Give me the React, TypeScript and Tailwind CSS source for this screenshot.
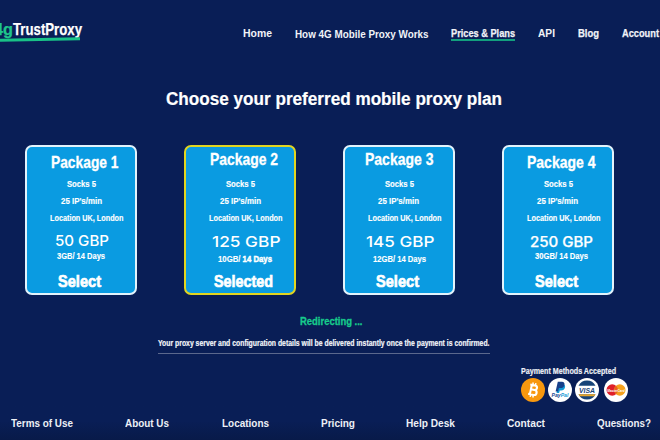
import { useLayoutEffect, useRef } from 'react'
import type { ReactNode } from 'react'

type FitProps = { className: string; children: ReactNode }

// Squeezes one line of text to the width of its box
function Fit({ className, children }: FitProps) {
  const box = useRef<HTMLDivElement>(null)
  const line = useRef<HTMLSpanElement>(null)

  useLayoutEffect(() => {
    if (!box.current || !line.current) return
    line.current.style.transform = 'none'
    const ratio = box.current.getBoundingClientRect().width / line.current.getBoundingClientRect().width
    line.current.style.transform = `scaleX(${ratio})`
  })

  return (
    <div ref={box} className={`shrink-0 whitespace-nowrap ${className}`}>
      <span ref={line} className="inline-block origin-left">{children}</span>
    </div>
  )
}

const packages = [
  {
    name: 'Package 1', price: '50 GBP', data: <>3GB/ 14 Days</>, action: 'Select',
    border: 'border-[#e3f3fb]',
    nameClass: 'mt-[5px] ml-[23.5px] w-[67.5px]',
    socksClass: 'ml-[40px] w-[29px]',
    ipClass: 'ml-[33.5px] w-[41px]',
    locationClass: 'ml-[23px] w-[73.5px]',
    priceClass: 'mt-1 ml-[28px] w-[54px] text-[14.5px]',
    dataClass: 'ml-[30px] w-[48px]',
    actionClass: 'ml-[31px] w-[43px]',
  },
  {
    name: 'Package 2', price: '125 GBP', data: <>10GB/ <span className="[-webkit-text-stroke:0.5px_white]">14 Days</span></>, action: 'Selected',
    border: 'border-[#e2d51f]',
    nameClass: 'mt-[2px] ml-[23.5px] w-[68px]',
    socksClass: 'ml-[40px] w-[29px]',
    ipClass: 'ml-[33.5px] w-[41px]',
    locationClass: 'ml-[23px] w-[73.5px]',
    priceClass: 'mt-[5px] ml-[26px] w-[68.5px] text-[15px]',
    dataClass: 'mt-[3px] ml-[31.5px] w-[54px]',
    actionClass: 'ml-[28px] w-[59px]',
  },
  {
    name: 'Package 3', price: '145 GBP', data: <>12GB/ 14 Days</>, action: 'Select',
    border: 'border-[#e3f3fb]',
    nameClass: 'mt-[2px] ml-[20px] w-[68.5px]',
    socksClass: 'ml-[40px] w-[29px]',
    ipClass: 'ml-[33px] w-[41px]',
    locationClass: 'ml-[22.5px] w-[73.5px]',
    priceClass: 'mt-[5px] ml-[21px] w-[68.5px] text-[15px]',
    dataClass: 'mt-[3px] ml-[28px] w-[53px]',
    actionClass: 'ml-[31px] w-[43px]',
  },
  {
    name: 'Package 4', price: '250 GBP', data: <>30GB/ 14 Days</>, action: 'Select',
    border: 'border-[#e3f3fb]',
    nameClass: 'mt-[5px] ml-[23px] w-[68.5px]',
    socksClass: 'ml-[40px] w-[29px]',
    ipClass: 'ml-[33px] w-[41px]',
    locationClass: 'ml-[22.5px] w-[73.5px]',
    priceClass: 'mt-[5px] ml-[26px] w-[63px] text-[14px] [-webkit-text-stroke:0.25px_white]',
    dataClass: 'ml-[31px] w-[53px]',
    actionClass: 'ml-[31px] w-[43px]',
  },
]

function Header() {
  return (
    <header className="flex h-[58px] items-start text-[#f1f3f8]">
      {/* Logo */}
      <div className="-ml-[6px] w-[88px] pt-[20px]">
        <div className="flex text-[17px] leading-[20px] [-webkit-text-stroke:0.25px_currentColor]">
          <Fit className="w-[19px] text-[#1fc58b]">4g</Fit>
          <Fit className="w-[69px] text-white">TrustProxy</Fit>
        </div>
        <div className="-mt-[2px] h-[2.5px] w-[86px] -rotate-1 bg-[#19c287]" />
      </div>

      {/* Navbar */}
      <nav className="flex items-start pt-[28px] font-['Liberation_Sans',sans-serif] text-[10px] leading-[12px]">
        <Fit className="ml-[161px] w-[29px]">Home</Fit>
        <Fit className="mt-px ml-[22.5px] w-[133.5px]">How 4G Mobile Proxy Works</Fit>
        <div className="ml-[23px] border-b-2 border-[#12a07e] font-['Liberation_Sans_Narrow','Liberation_Sans',sans-serif]">
          <Fit className="w-[64px] text-[11.5px] leading-[11px] [-webkit-text-stroke:0.25px_currentColor]">Prices &amp; Plans</Fit>
        </div>
        <Fit className="ml-[23px] w-[17px]">API</Fit>
        <div className="flex font-['Liberation_Sans_Narrow','Liberation_Sans',sans-serif] text-[11.5px] leading-[11px] [-webkit-text-stroke:0.25px_currentColor]">
          <Fit className="ml-[23px] w-[21px]">Blog</Fit>
          <Fit className="ml-[22.5px] w-[37px]">Account</Fit>
        </div>
      </nav>
    </header>
  )
}

function Plans() {
  return (
    <section className="flex gap-[47px] pl-[25px] text-white">
      {packages.map((item) => (
        <div key={item.name} className={`h-[150px] w-[112px] shrink-0 rounded-[7px] border-2 bg-[#0a9be1] ${item.border}`}>
          <div className="flex h-[28px] items-start text-[16.5px] leading-[20px] [-webkit-text-stroke:0.3px_white]">
            <Fit className={item.nameClass}>{item.name}</Fit>
          </div>
          <div className="text-[9.5px] leading-[17px] [-webkit-text-stroke:0.15px_white]">
            <Fit className={item.socksClass}>Socks 5</Fit>
            <Fit className={item.ipClass}>25 IP's/min</Fit>
            <Fit className={item.locationClass}>Location UK, London</Fit>
          </div>
          <div className="flex h-[24px] items-start font-['Inter','Liberation_Sans',sans-serif] leading-[21px] font-medium">
            <Fit className={item.priceClass}>{item.price}</Fit>
          </div>
          <div className="flex h-[21px] items-start text-[9.5px] leading-[12px] [-webkit-text-stroke:0.15px_white]">
            <Fit className={item.dataClass}>{item.data}</Fit>
          </div>
          <div className="text-[16.5px] leading-[20px] [-webkit-text-stroke:0.7px_white]">
            <Fit className={item.actionClass}>{item.action}</Fit>
          </div>
        </div>
      ))}
    </section>
  )
}

function Payments() {
  return (
    <section className="mt-[11px] ml-[520px]">
      <Fit className="ml-[0.5px] w-[95px] text-[9px] leading-[12px] text-[#eef1f7] [-webkit-text-stroke:0.2px_currentColor]">Payment Methods Accepted</Fit>
      <div className="mt-px ml-[0.5px] flex">
        {/* Bitcoin */}
        <svg className="mr-[3px] h-6 w-6" viewBox="0 0 24 24">
          <circle cx="12" cy="12" r="12" fill="#f8980f" />
          <g transform="rotate(12 12 12)" fill="none" stroke="#fff">
            <path d="M8.2 7.2h5a2.2 2.2 0 0 1 0 4.5H9.8h3.8a2.5 2.5 0 0 1 0 5H8M9.8 7.2v9.5" strokeWidth="2.1" />
            <path d="M10.7 4.6v2.7M13.4 4.6v2.7M10.7 16.5v2.9M13.4 16.5v2.9" strokeWidth="1.5" />
          </g>
        </svg>
        {/* PayPal */}
        <svg className="mr-[3px] h-6 w-6" viewBox="0 0 24 24">
          <circle cx="12" cy="12" r="12" fill="#fff" />
          <path d="M10.6 6.3h4.2c2 0 2.7 1.4 2.2 3.2-.5 2.1-1.9 3-3.8 3h-1.4l-.7 2.4h-2.6z" fill="#139ad6" />
          <path d="M9.8 3.8h4.1c2.1 0 2.9 1.3 2.5 3.1-.5 2.3-2 3.2-4 3.2h-1.5l-.8 3.4H7.6z" fill="#17408b" />
          <text x="3.6" y="19.2" textLength="16.8" lengthAdjust="spacingAndGlyphs" fontSize="6" fontStyle="italic" fill="#164a91">
            Pay<tspan fill="#169bd7">Pal</tspan>
          </text>
        </svg>
        {/* Visa */}
        <svg className="mr-[5px] h-6 w-6" viewBox="0 0 24 24">
          <circle cx="12" cy="12" r="12" fill="#fff" />
          <path d="M3.5 7.8a9.5 9.5 0 0 1 17 0z" fill="#174478" />
          <path d="M3.5 16.2a9.5 9.5 0 0 0 17 0z" fill="#174478" />
          <path d="M3.5 16.2h17l-1.3 2H4.8z" fill="#e9a72b" />
          <text x="4" y="15" textLength="16" lengthAdjust="spacingAndGlyphs" fontSize="8" fontStyle="italic" fill="#174478">VISA</text>
        </svg>
        {/* MasterCard */}
        <svg className="h-6 w-6" viewBox="0 0 24 24">
          <circle cx="12" cy="12" r="12" fill="#fff" />
          <circle cx="8.2" cy="12" r="5.7" fill="#df2029" />
          <circle cx="15.8" cy="12" r="5.7" fill="#f5a11c" />
          <path d="M12 7.7a5.7 5.7 0 0 1 0 8.6a5.7 5.7 0 0 1 0-8.6z" fill="#e96020" />
          <text x="3.3" y="13.5" textLength="17.4" lengthAdjust="spacingAndGlyphs" fontSize="4.4" fontStyle="italic" fill="#fff">MasterCard</text>
        </svg>
      </div>
    </section>
  )
}

function Footer() {
  return (
    <footer className="flex h-[38px] items-start bg-linear-to-b from-[#091e56] from-50% to-[#081a49] pt-[16px] font-['Liberation_Sans',sans-serif] text-[10px] leading-[12px] text-[#edf0f6]">
      <Fit className="ml-[11px] w-[62px]">Terms of Use</Fit>
      <Fit className="ml-[52px] w-[44px]">About Us</Fit>
      <Fit className="ml-[52.5px] w-[47px]">Locations</Fit>
      <Fit className="ml-[52px] w-[34px]">Pricing</Fit>
      <Fit className="ml-[51.5px] w-[49px]">Help Desk</Fit>
      <Fit className="ml-[52px] w-[38px]">Contact</Fit>
      <Fit className="ml-[52px] w-[54px]">Questions?</Fit>
    </footer>
  )
}

function App() {
  return (
    <main className="h-[440px] w-[660px] overflow-hidden bg-[#091e56] font-['Liberation_Sans_Narrow','Liberation_Sans',sans-serif] font-bold">
      <Header />

      {/* Title */}
      <h1 className="flex h-[87px] pt-[31px] pl-[166px] font-['Liberation_Sans',sans-serif] text-[18px] leading-[20px] text-white [-webkit-text-stroke:0.2px_white]">
        <Fit className="w-[336px]">Choose your preferred mobile proxy plan</Fit>
      </h1>

      <Plans />

      {/* Status */}
      <section className="ml-[158px] flex h-[59px] w-[332px] flex-col border-b border-[#5b688d] pt-[20px]">
        <Fit className="ml-[141.5px] w-[62.5px] text-[11px] leading-[13px] text-[#17cb8c] [-webkit-text-stroke:0.3px_currentColor]">Redirecting ...</Fit>
        <Fit className="mt-[9px] w-[331.5px] text-[9px] leading-[12px] text-[#f4f6fa] [-webkit-text-stroke:0.2px_currentColor]">
          Your proxy server and configuration details will be delivered instantly once the payment is confirmed.
        </Fit>
      </section>

      <Payments />
      <Footer />
    </main>
  )
}

export default App
